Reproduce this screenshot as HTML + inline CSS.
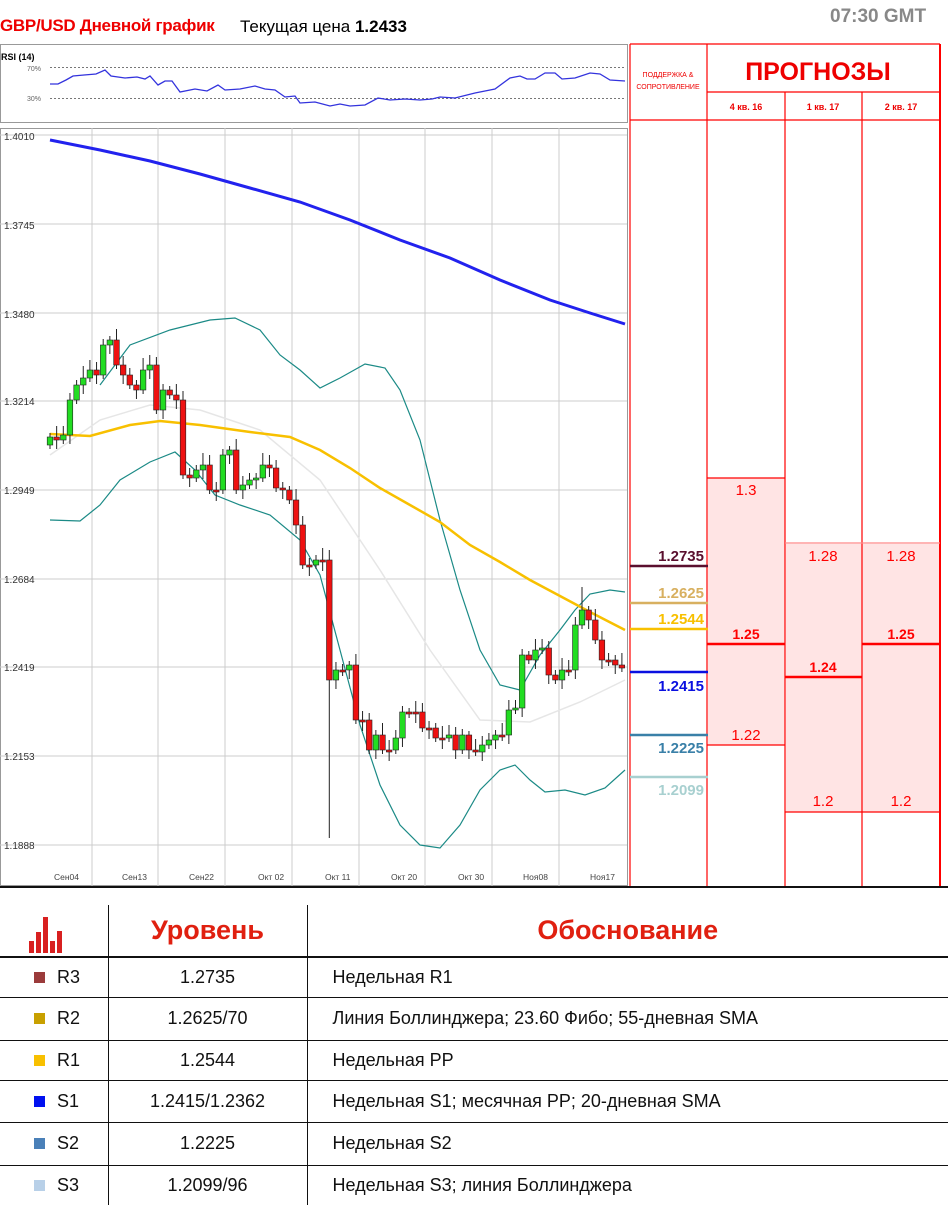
<!DOCTYPE html>
<html><head><meta charset="utf-8"><style>
body{margin:0;width:948px;height:1205px;background:#fff;font-family:"Liberation Sans",sans-serif;position:relative;overflow:hidden}
.abs{position:absolute}
table{border-collapse:collapse}
</style></head><body>
<div class="abs" style="left:0;top:16px;font-size:17px;font-weight:bold;color:#e00;letter-spacing:-0.3px">GBP/USD Дневной график</div>
<div class="abs" style="left:240px;top:17px;font-size:17px;color:#000">Текущая цена <b>1.2433</b></div>
<div class="abs" style="left:830px;top:6px;font-size:19px;font-weight:bold;color:#888">07:30 GMT</div>

<svg class="abs" style="left:0;top:0" width="948" height="890" id="svg">
<rect x="0.5" y="44.5" width="627" height="78" fill="none" stroke="#999"/>
<text x="1" y="60" font-size="9" font-family="Liberation Sans" font-weight="bold">RSI (14)</text>
<text x="27" y="71" font-size="7" fill="#666" font-family="Liberation Sans">70%</text>
<text x="27" y="101" font-size="7" fill="#666" font-family="Liberation Sans">30%</text>
<line x1="50" y1="67.5" x2="625" y2="67.5" stroke="#777" stroke-dasharray="2,2"/>
<line x1="50" y1="98.5" x2="625" y2="98.5" stroke="#777" stroke-dasharray="2,2"/>
<polyline fill="none" stroke="#33d" stroke-width="1.3" points="50,84 58,84 66,80 73,76 84,75 96,74 105,70 111,76 125,78 137,77 145,79 150,76 158,85 165,81 172,81 180,92 195,89 207,91 218,85 225,90 240,89 255,86 265,89 275,90 285,97 295,96 300,103 315,102 330,106 340,104 350,106 365,105 378,98 390,100 405,99 420,100 432,99 440,97 455,98 475,93 485,91 495,89 510,78 520,76 527,79 535,79 545,73 555,73 562,79 575,78 590,73 600,74 610,80 625,81"/>
<rect x="0.5" y="128.5" width="627" height="757" fill="none" stroke="#999"/>
<g stroke="#ccc" stroke-width="1">
<line x1="0" y1="135" x2="627" y2="135"/><line x1="0" y1="224" x2="627" y2="224"/><line x1="0" y1="313" x2="627" y2="313"/><line x1="0" y1="401" x2="627" y2="401"/><line x1="0" y1="490" x2="627" y2="490"/><line x1="0" y1="579" x2="627" y2="579"/><line x1="0" y1="667" x2="627" y2="667"/><line x1="0" y1="756" x2="627" y2="756"/><line x1="0" y1="845" x2="627" y2="845"/>
<line x1="92" y1="128" x2="92" y2="886"/><line x1="158" y1="128" x2="158" y2="886"/><line x1="225" y1="128" x2="225" y2="886"/><line x1="292" y1="128" x2="292" y2="886"/><line x1="359" y1="128" x2="359" y2="886"/><line x1="425" y1="128" x2="425" y2="886"/><line x1="492" y1="128" x2="492" y2="886"/><line x1="559" y1="128" x2="559" y2="886"/>
</g>
<g font-size="10" font-family="Liberation Sans" fill="#333">
<text x="4" y="140">1.4010</text><text x="4" y="229">1.3745</text><text x="4" y="318">1.3480</text><text x="4" y="405">1.3214</text><text x="4" y="494">1.2949</text><text x="4" y="583">1.2684</text><text x="4" y="671">1.2419</text><text x="4" y="760">1.2153</text><text x="4" y="849">1.1888</text>
</g>
<g font-size="8.5" font-family="Liberation Sans" fill="#444">
<text x="54" y="880">Сен04</text><text x="122" y="880">Сен13</text><text x="189" y="880">Сен22</text><text x="258" y="880">Окт 02</text><text x="325" y="880">Окт 11</text><text x="391" y="880">Окт 20</text><text x="458" y="880">Окт 30</text><text x="523" y="880">Ноя08</text><text x="590" y="880">Ноя17</text>
</g>
<polyline fill="none" stroke="#e6e6e6" stroke-width="1.5" points="50,455 100,420 150,405 200,410 260,430 320,480 380,570 430,650 480,720 530,722 580,702 625,680"/>
<polyline fill="none" stroke="#2222ee" stroke-width="3" points="50,140 100,150 150,161 200,174 250,188 300,202 350,220 400,240 450,258 500,280 550,300 590,313 625,324"/>
<polyline fill="none" stroke="#1b8a86" stroke-width="1.2" points="100,385 130,345 170,330 210,320 235,318 260,330 280,355 300,370 320,388 340,378 365,364 385,368 400,390 420,440 440,520 460,590 480,650 500,685 520,690 540,655 560,630 575,610 590,594 610,590 625,592"/>
<polyline fill="none" stroke="#1b8a86" stroke-width="1.2" points="50,520 80,521 100,505 120,480 150,462 175,452 195,470 215,495 240,505 270,515 300,540 320,575 340,650 360,725 380,785 400,825 420,845 440,848 460,825 480,790 500,770 515,765 530,780 545,792 565,790 585,795 605,788 625,770"/>
<polyline fill="none" stroke="#f8c000" stroke-width="2.5" points="50,434 90,436 130,425 160,421 200,425 250,432 290,437 320,450 350,468 380,488 410,505 440,522 470,545 500,562 530,580 560,596 590,612 625,630"/>
<g id="candles"></g>

<rect x="708" y="478" width="77" height="267" fill="#ffe4e4"/>
<rect x="786" y="544" width="154" height="268" fill="#ffe4e4"/>
<g stroke="#f00" stroke-width="1.2" fill="none">
<line x1="630" y1="44" x2="630" y2="886"/>
<line x1="707" y1="44" x2="707" y2="886"/>
<line x1="785" y1="92" x2="785" y2="886"/>
<line x1="862" y1="92" x2="862" y2="886"/>
<line x1="940" y1="44" x2="940" y2="886" stroke-width="2"/>
<line x1="630" y1="44" x2="940" y2="44"/>
<line x1="707" y1="92" x2="940" y2="92"/>
<line x1="630" y1="120" x2="940" y2="120"/>
<line x1="707" y1="478" x2="785" y2="478"/>
<line x1="707" y1="745" x2="785" y2="745"/>
<line x1="785" y1="543" x2="940" y2="543" stroke="#f88"/>
<line x1="785" y1="812" x2="940" y2="812"/>
</g>
<line x1="707" y1="644" x2="785" y2="644" stroke="#f00" stroke-width="2.5"/>
<line x1="862" y1="644" x2="940" y2="644" stroke="#f00" stroke-width="2.5"/>
<line x1="785" y1="677" x2="862" y2="677" stroke="#f00" stroke-width="2.5"/>
<text x="668" y="77" font-size="7" fill="#e00" text-anchor="middle" font-family="Liberation Sans">ПОДДЕРЖКА &amp;</text>
<text x="668" y="89" font-size="7" fill="#e00" text-anchor="middle" font-family="Liberation Sans">СОПРОТИВЛЕНИЕ</text>
<text x="818" y="80" font-size="25" font-weight="bold" fill="#e00" text-anchor="middle" font-family="Liberation Sans">ПРОГНОЗЫ</text>
<g font-size="9" fill="#e00" text-anchor="middle" font-family="Liberation Sans" font-weight="bold">
<text x="746" y="110">4 кв. 16</text><text x="823" y="110">1 кв. 17</text><text x="901" y="110">2 кв. 17</text>
</g>
<g font-size="15" fill="#f00" text-anchor="middle" font-family="Liberation Sans">
<text x="746" y="495">1.3</text><text x="746" y="740">1.22</text>
<text x="823" y="561">1.28</text><text x="901" y="561">1.28</text>
<text x="823" y="806">1.2</text><text x="901" y="806">1.2</text>
</g>
<g font-size="14" fill="#f00" text-anchor="middle" font-family="Liberation Sans" font-weight="bold">
<text x="746" y="639">1.25</text><text x="823" y="672">1.24</text><text x="901" y="639">1.25</text>
</g>
<g stroke-width="2.5">
<line x1="630" y1="566" x2="708" y2="566" stroke="#5a0f2e"/>
<line x1="630" y1="603" x2="708" y2="603" stroke="#d8b060"/>
<line x1="630" y1="629" x2="708" y2="629" stroke="#f8c000"/>
<line x1="630" y1="672" x2="708" y2="672" stroke="#0a10e0"/>
<line x1="630" y1="735" x2="708" y2="735" stroke="#3a80a8"/>
<line x1="630" y1="777" x2="708" y2="777" stroke="#a8d0d0"/>
</g>
<g font-size="15" font-weight="bold" text-anchor="end" font-family="Liberation Sans">
<text x="704" y="561" fill="#5a0f2e">1.2735</text>
<text x="704" y="598" fill="#d8b060">1.2625</text>
<text x="704" y="624" fill="#f8c000">1.2544</text>
<text x="704" y="691" fill="#0a10e0">1.2415</text>
<text x="704" y="753" fill="#3a80a8">1.2225</text>
<text x="704" y="795" fill="#a8d0d0">1.2099</text>
</g>
</svg>

<div class="abs" style="left:0;top:886px;width:948px;height:2px;background:#111"></div>
<table class="abs" style="left:0;top:905px;width:948px;font-size:18px;color:#111">
<colgroup><col style="width:108px"><col style="width:199px"><col></colgroup>
<tr style="height:52px">
<td style="border-right:1px solid #111;border-bottom:2px solid #111;position:relative">
<svg width="40" height="36" style="position:absolute;left:29px;top:12px"><g fill="#d82020"><rect x="0" y="24" width="5" height="12"/><rect x="7" y="15" width="5" height="21"/><rect x="14" y="0" width="5" height="36"/><rect x="21" y="24" width="5" height="12"/><rect x="28" y="14" width="5" height="22"/></g></svg></td>
<td style="border-right:1px solid #111;border-bottom:2px solid #111;text-align:center;color:#e02010;font-weight:bold;font-size:27px">Уровень</td>
<td style="border-bottom:2px solid #111;text-align:center;color:#e02010;font-weight:bold;font-size:27px">Обоснование</td></tr>
<tr style="height:40px"><td style="border-bottom:1px solid #111;border-right:1px solid #111;padding-left:34px"><span style="display:inline-block;width:11px;height:11px;background:#9b3b3b;margin-right:12px"></span>R3</td><td style="border-bottom:1px solid #111;border-right:1px solid #111;text-align:center">1.2735</td><td style="border-bottom:1px solid #111;padding-left:25px">Недельная R1</td></tr>
<tr style="height:43px"><td style="border-bottom:1px solid #111;border-right:1px solid #111;padding-left:34px"><span style="display:inline-block;width:11px;height:11px;background:#c8a000;margin-right:12px"></span>R2</td><td style="border-bottom:1px solid #111;border-right:1px solid #111;text-align:center">1.2625/70</td><td style="border-bottom:1px solid #111;padding-left:25px">Линия Боллинджера; 23.60 Фибо; 55-дневная SMA</td></tr>
<tr style="height:40px"><td style="border-bottom:1px solid #111;border-right:1px solid #111;padding-left:34px"><span style="display:inline-block;width:11px;height:11px;background:#f8c000;margin-right:12px"></span>R1</td><td style="border-bottom:1px solid #111;border-right:1px solid #111;text-align:center">1.2544</td><td style="border-bottom:1px solid #111;padding-left:25px">Недельная PP</td></tr>
<tr style="height:42px"><td style="border-bottom:1px solid #111;border-right:1px solid #111;padding-left:34px"><span style="display:inline-block;width:11px;height:11px;background:#0010f0;margin-right:12px"></span>S1</td><td style="border-bottom:1px solid #111;border-right:1px solid #111;text-align:center">1.2415/1.2362</td><td style="border-bottom:1px solid #111;padding-left:25px">Недельная S1; месячная PP; 20-дневная SMA</td></tr>
<tr style="height:43px"><td style="border-bottom:1px solid #111;border-right:1px solid #111;padding-left:34px"><span style="display:inline-block;width:11px;height:11px;background:#4a80b8;margin-right:12px"></span>S2</td><td style="border-bottom:1px solid #111;border-right:1px solid #111;text-align:center">1.2225</td><td style="border-bottom:1px solid #111;padding-left:25px">Недельная S2</td></tr>
<tr style="height:40px"><td style="border-right:1px solid #111;padding-left:34px"><span style="display:inline-block;width:11px;height:11px;background:#b8d0e8;margin-right:12px"></span>S3</td><td style="border-right:1px solid #111;text-align:center">1.2099/96</td><td style="padding-left:25px">Недельная S3; линия Боллинджера</td></tr>
</table>
<script>
(function(){
var c=[437,440,435,400,385,378,370,375,345,340,365,375,385,390,370,365,410,390,395,400,475,478,470,465,490,490,455,450,490,485,480,478,465,468,488,490,500,525,565,565,560,560,680,670,670,665,720,720,750,735,750,750,738,712,712,712,728,728,738,738,735,750,735,750,752,745,740,735,735,710,708,655,660,650,648,675,680,670,670,625,610,620,640,660,660,665,668];
var g=document.getElementById('candles'),h='',prev=445;
for(var i=0;i<c.length;i++){var x=50+i*6.65,o=prev,cl=c[i],t=Math.min(o,cl),b=Math.max(o,cl);if(b-t<2)b=t+2;
var up=cl<o;var hi=t-4-(i*7%9),lo=b+4+(i*5%10);if(i==42)lo=838;if(i==80)hi=587;
h+='<line x1="'+x+'" y1="'+hi+'" x2="'+x+'" y2="'+lo+'" stroke="#222" stroke-width="1"/>';
h+='<rect x="'+(x-2.8)+'" y="'+t+'" width="5.6" height="'+(b-t)+'" fill="'+(up?'#22dd22':'#ee1111')+'" stroke="#222" stroke-width="0.6"/>';prev=cl;}
g.innerHTML=h;
})();
</script>
</body></html>
